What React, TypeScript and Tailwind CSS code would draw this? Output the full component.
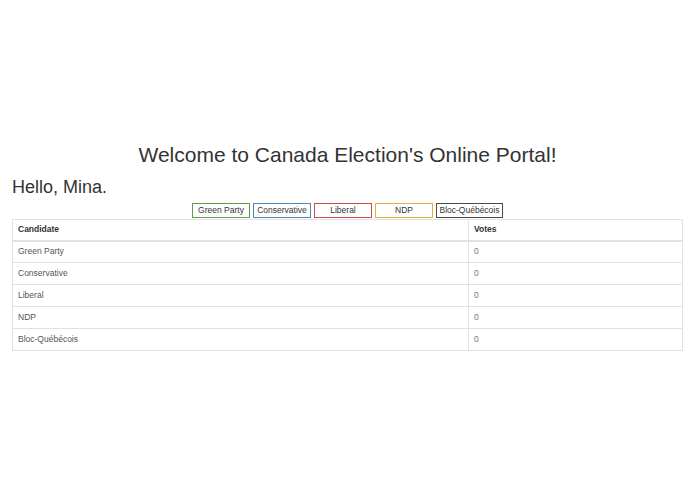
import React from "react";

const parties = [
  { name: "Green Party", border: "border-[#5f9e45]", w: "w-[58px]" },
  { name: "Conservative", border: "border-[#4f87b5]", w: "w-[58px]" },
  { name: "Liberal", border: "border-[#cc4a4e]", w: "w-[58px]" },
  { name: "NDP", border: "border-[#eeaa3c]", w: "w-[58px]" },
  { name: "Bloc-Québécois", border: "border-[#4a4a4a]", w: "w-[67px]" },
];

export default function App() {
  return (
    <div className="min-h-[494px] bg-white text-[#333] font-['Liberation_Sans',Arial,sans-serif]">
      <div className="px-3 pt-[142px]">
        <h1 className="text-center text-[21px] leading-[26px]">Welcome to Canada Election's Online Portal!</h1>
        <h2 className="mt-[9px] text-[18px] leading-[21px]">Hello, Mina.</h2>

        <div className="mt-[5px] flex justify-center gap-[3px]">
          {parties.map((p) => (
            <button
              key={p.name}
              className={`h-[15px] ${p.w} border ${p.border} bg-white text-[8.5px] leading-[13px] text-[#333]`}
            >
              {p.name}
            </button>
          ))}
        </div>

        <table className="mt-px w-full border-collapse border border-[#e2e2e2] text-[8.5px]">
          <thead>
            <tr className="h-[21px] border-b-2 border-[#e2e2e2]">
              <th className="w-[456px] border-r border-[#e2e2e2] px-[5px] text-left font-bold text-[#333]">Candidate</th>
              <th className="px-[5px] text-left font-bold text-[#333]">Votes</th>
            </tr>
          </thead>
          <tbody>
            {parties.map((p) => (
              <tr key={p.name} className="h-[22px] border-b border-[#e2e2e2]">
                <td className="border-r border-[#e2e2e2] px-[5px] text-[#555]">{p.name}</td>
                <td className="px-[5px] text-[#777]">0</td>
              </tr>
            ))}
          </tbody>
        </table>
      </div>
    </div>
  );
}
